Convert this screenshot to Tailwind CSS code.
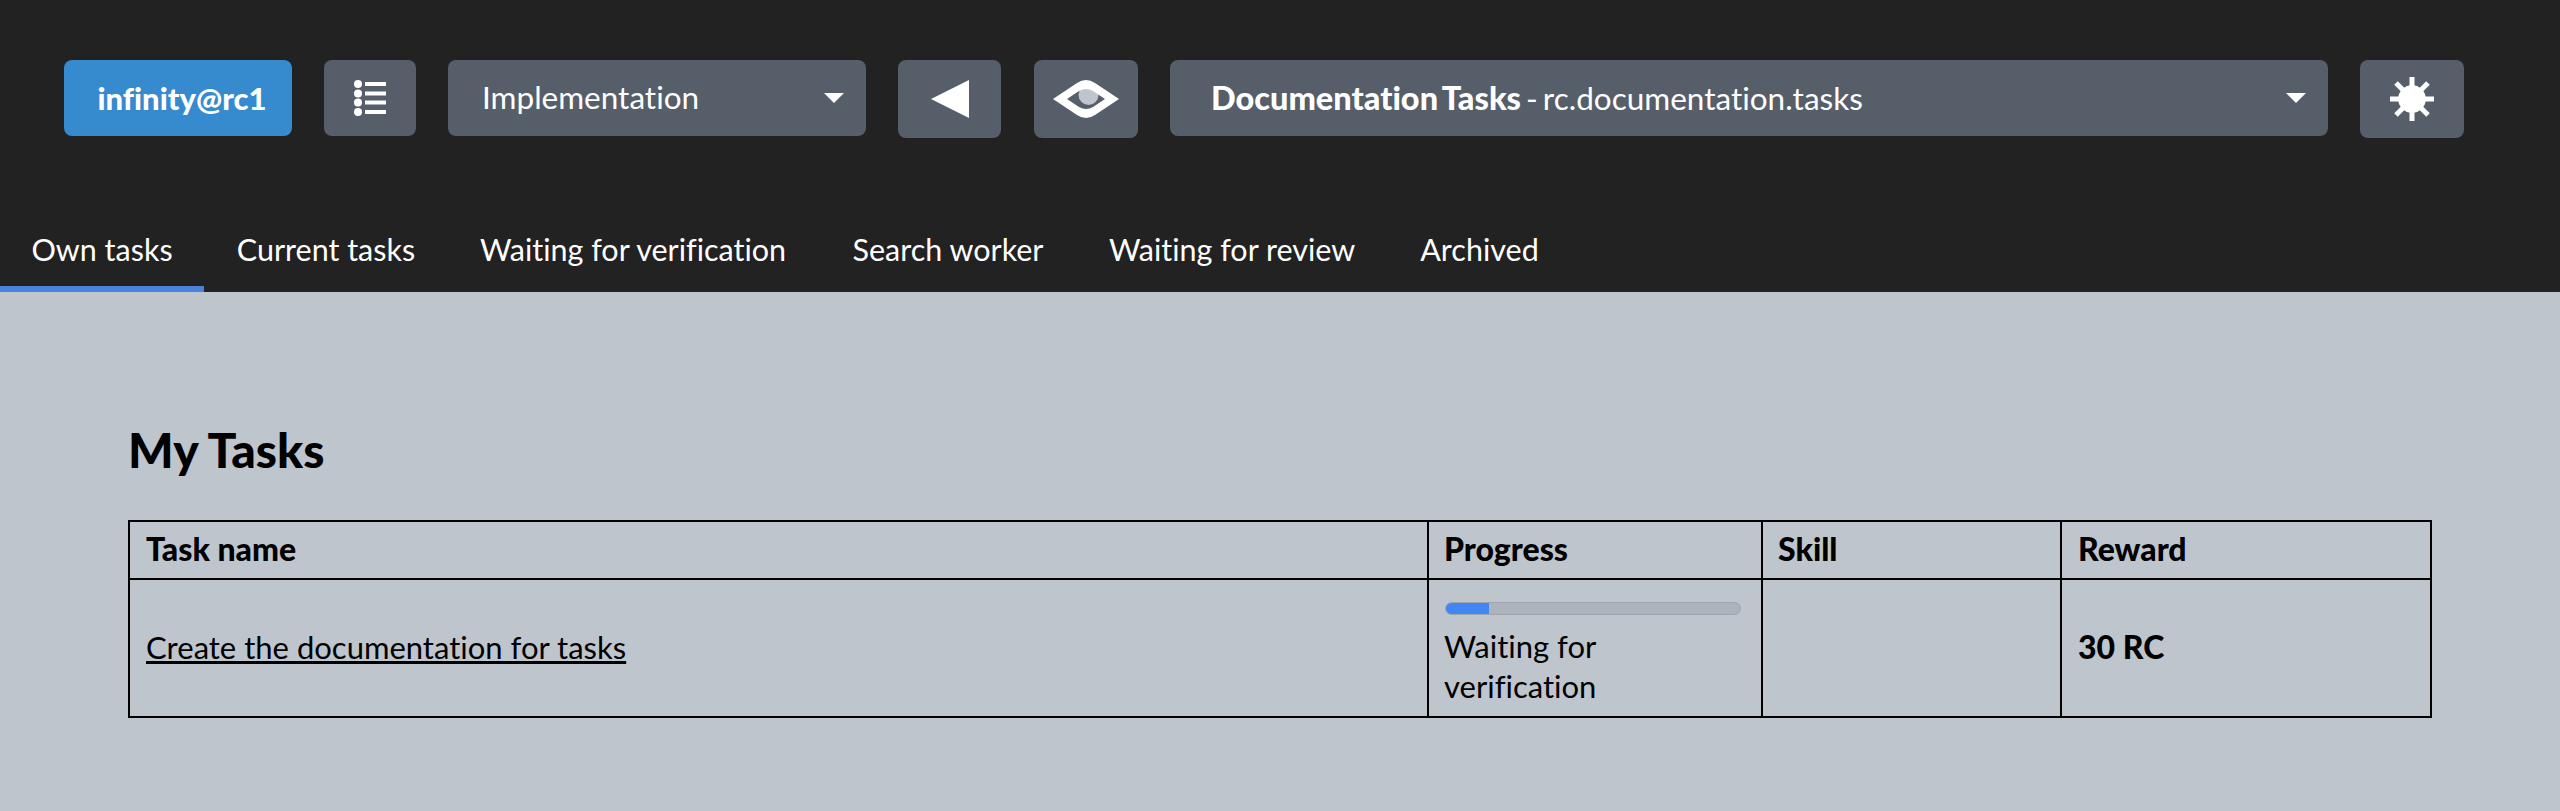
<!DOCTYPE html>
<html lang="en">
  <head>
    <meta charset="UTF-8" />
    <title>My Tasks</title>
    <script src="https://cdn.jsdelivr.net/npm/@tailwindcss/browser@4"></script>
  </head>
  <body class="bg-[#bec5cd] min-h-screen font-['Lato','Liberation_Sans',sans-serif] [font-variant-ligatures:none] text-black">
    <header class="bg-[#222222] h-[292px] flex flex-col text-white">
      <div class="flex items-start gap-8 pl-16 pt-[60px] h-[226px]">
        <button class="w-[228px] h-[76px] pl-[8px] rounded-lg bg-[#368ace] font-black text-[31px]">infinity@rc1</button>
        <button class="w-[92px] h-[76px] rounded-lg bg-[#565e6a] flex items-center justify-center">
          <svg width="32" height="36" viewBox="0 0 32 36" fill="#fff">
            <circle cx="4" cy="4" r="4" /><rect x="11" y="2" width="21" height="4" />
            <circle cx="4" cy="13.5" r="4" /><rect x="11" y="11.5" width="21" height="4" />
            <circle cx="4" cy="22.5" r="4" /><rect x="11" y="20.5" width="21" height="4" />
            <circle cx="4" cy="32" r="4" /><rect x="11" y="30" width="21" height="4" />
          </svg>
        </button>
        <div class="w-[418px] h-[76px] rounded-lg bg-[#565e6a] flex items-center justify-between pl-[34px] pr-[22px] text-[31.5px]">
          <span>Implementation</span>
          <span class="border-x-[10px] border-x-transparent border-t-[10px] border-t-white"></span>
        </div>
        <button class="w-[103px] h-[78px] rounded-lg bg-[#565e6a] flex items-center justify-center">
          <svg width="38" height="38" viewBox="0 0 38 38" fill="#fff"><path d="M0 19 38 0V38Z" /></svg>
        </button>
        <button class="w-[104px] h-[78px] ml-px rounded-lg bg-[#565e6a] flex items-center justify-center">
          <svg width="66" height="40" viewBox="0 0 66 40">
            <circle cx="35.5" cy="16" r="10" fill="#bec5cd" />
            <path fill="#fff" fill-rule="evenodd" d="M0 20 24 4Q33-2 42 4L66 20 42 36Q33 42 24 36ZM14 20 26 28Q33 32 40 28L52 20 40 12Q33 8 26 12Z" />
          </svg>
        </button>
        <div class="w-[1158px] h-[76px] rounded-lg bg-[#565e6a] flex items-center justify-between pl-[41px] pr-[22px] text-[31.5px]">
          <span class="[word-spacing:-3px]"><b class="font-black text-[32.5px]">Documentation Tasks</b> - rc.documentation.tasks</span>
          <span class="border-x-[10px] border-x-transparent border-t-[10px] border-t-white"></span>
        </div>
        <button class="w-[104px] h-[78px] rounded-lg bg-[#565e6a] flex items-center justify-center">
          <svg width="44" height="44" viewBox="0 0 44 44" fill="#fff" stroke="#fff">
            <circle cx="22" cy="22" r="13.5" />
            <path stroke-width="5" d="M22 0V44M0 22H44M6 6 38 38M38 6 6 38" />
          </svg>
        </button>
      </div>
      <nav class="flex h-[66px] text-[30.5px] leading-[46px]">
        <a href="#" class="w-[204px] text-center border-b-[6px] border-[#4a82dc]">Own tasks</a>
        <a href="#" class="w-[242px] ml-px text-center">Current tasks</a>
        <a href="#" class="w-[372px] text-center">Waiting for verification</a>
        <a href="#" class="w-[258px] text-center">Search worker</a>
        <a href="#" class="w-[310px] text-center">Waiting for review</a>
        <a href="#" class="w-[185px] text-center">Archived</a>
      </nav>
    </header>
    <main class="px-[128px] pt-[134px]">
      <h1 class="font-black text-[48px] leading-[48px] mb-[46px]">My Tasks</h1>
      <table class="w-[2304px] table-fixed border-collapse border-2 border-black text-[31px] leading-[40px]">
        <thead>
          <tr class="h-[58px] text-left">
            <th class="w-[1299px] border-2 border-black px-4 pb-[2px] font-black text-[32px]">Task name</th>
            <th class="w-[334px] border-2 border-black pl-[15px] pr-4 pb-[2px] font-black text-[32px]">Progress</th>
            <th class="w-[299px] border-2 border-black pl-[15px] pr-4 pb-[2px] font-black text-[32px]">Skill</th>
            <th class="border-2 border-black px-4 pb-[2px] font-black text-[32px]">Reward</th>
          </tr>
        </thead>
        <tbody>
          <tr class="h-[138px]">
            <td class="border-2 border-black px-4 pb-[2px]"><a href="#" class="underline">Create the documentation for tasks</a></td>
            <td class="border-2 border-black pl-[15px] pr-4 pt-[21px] pb-[10px]">
              <div class="h-[13px] w-[296px] ml-px rounded-full bg-[#adb3bc] border border-[#9ea5af] overflow-hidden mb-[11px]">
                <div class="h-full w-[43px] bg-[#4285f4]"></div>
              </div>
              Waiting for verification
            </td>
            <td class="border-2 border-black px-4"></td>
            <td class="border-2 border-black px-4 pb-[2px] font-black text-[32px]">30 RC</td>
          </tr>
        </tbody>
      </table>
    </main>
  </body>
</html>
